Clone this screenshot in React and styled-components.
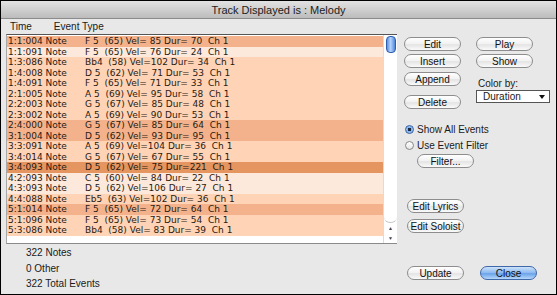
import styled, { createGlobalStyle } from "styled-components";

const GlobalStyle = createGlobalStyle`
    html, body {
        margin: 0;
        padding: 0;
        background: #ffffff;
    }
    body {
        font-family: "Lucida Grande", "Liberation Sans", "DejaVu Sans", sans-serif;
    }
`;

const events = [
    ["1:1:004", "F 5  (65) Vel= 85 Dur= 70  Ch 1", 70],
    ["1:1:091", "F 5  (65) Vel= 76 Dur= 24  Ch 1", 24],
    ["1:3:086", "Bb4  (58) Vel=102 Dur= 34  Ch 1", 34],
    ["1:4:008", "D 5  (62) Vel= 71 Dur= 53  Ch 1", 53],
    ["1:4:091", "F 5  (65) Vel= 71 Dur= 33  Ch 1", 33],
    ["2:1:005", "A 5  (69) Vel= 95 Dur= 58  Ch 1", 58],
    ["2:2:003", "G 5  (67) Vel= 85 Dur= 48  Ch 1", 48],
    ["2:3:002", "A 5  (69) Vel= 90 Dur= 53  Ch 1", 53],
    ["2:4:000", "G 5  (67) Vel= 85 Dur= 64  Ch 1", 64],
    ["3:1:004", "D 5  (62) Vel= 93 Dur= 95  Ch 1", 95],
    ["3:3:091", "A 5  (69) Vel=104 Dur= 36  Ch 1", 36],
    ["3:4:014", "G 5  (67) Vel= 67 Dur= 55  Ch 1", 55],
    ["3:4:093", "D 5  (62) Vel= 75 Dur=221  Ch 1", 221],
    ["4:2:093", "C 5  (60) Vel= 84 Dur= 22  Ch 1", 22],
    ["4:3:093", "D 5  (62) Vel=106 Dur= 27  Ch 1", 27],
    ["4:4:088", "Eb5  (63) Vel=102 Dur= 36  Ch 1", 36],
    ["5:1:014", "F 5  (65) Vel= 72 Dur= 64  Ch 1", 64],
    ["5:1:096", "F 5  (65) Vel= 73 Dur= 54  Ch 1", 54],
    ["5:3:086", "Bb4  (58) Vel= 83 Dur= 39  Ch 1", 39],
];

const shadeFor = (dur) => {
    if (dur > 100) return "#e5955f";
    if (dur >= 60) return "#f3b28b";
    if (dur >= 30) return "#fed3b6";
    return "#fde9dc";
};

const Window = styled.div`
    width: 557px;
    height: 295px;
    box-sizing: border-box;
    border: 1px solid #000;
    background: #e8e8e8;
    display: flex;
    flex-direction: column;
    font-size: 10px;
    color: #1a1a1a;
`;

const TitleBar = styled.div`
    height: 17px;
    flex: none;
    display: flex;
    align-items: center;
    justify-content: center;
    font-size: 11px;
    color: #1c1c1c;
    background: linear-gradient(#e2e2e2, #bcbcbc);
    border-bottom: 1px solid #8c8c8c;
`;

const Body = styled.div`
    flex: 1;
    display: flex;
`;

const LeftPane = styled.div`
    width: 391px;
    padding-left: 5px;
    display: flex;
    flex-direction: column;
`;

const Header = styled.div`
    height: 15px;
    display: flex;
    align-items: center;
    padding-left: 4px;
    gap: 22px;
`;

const ListBox = styled.div`
    height: 210px;
    box-sizing: border-box;
    display: flex;
    background: #fff;
    border-top: 1px solid #555;
    border-left: 1px solid #a8a8a8;
    border-bottom: 1px solid #8a8a8a;
`;

const Rows = styled.div`
    flex: 1;
    padding-top: 1px;
    font-family: "DejaVu Sans", "Liberation Sans", sans-serif;
    font-size: 9px;
`;

const Row = styled.div`
    height: 10.5px;
    line-height: 10.5px;
    display: flex;
    white-space: pre;
    background: ${(p) => p.$shade};
    color: #2a1a10;
    padding-left: 1px;
`;

const TimeCell = styled.span`
    width: 77px;
    flex: none;
`;

const Scrollbar = styled.div`
    width: 13px;
    flex: none;
    display: flex;
    flex-direction: column;
    align-items: center;
    border-left: 1px solid #dcdcdc;
    background: #fff;
`;

const Thumb = styled.div`
    margin-top: 1px;
    width: 8px;
    height: 15px;
    border-radius: 4px;
    border: 1px solid #2d5fb0;
    background: linear-gradient(90deg, #5b8fe0, #b6d4fb 45%, #4f86dd);
`;

const Track = styled.div`
    flex: 1;
    width: 100%;
    border-bottom: 1px solid #c8c8c8;
    border-radius: 0 0 6px 6px;
`;

const Arrow = styled.div`
    height: 10px;
    width: 100%;
    display: flex;
    align-items: center;
    justify-content: center;
    font-size: 5px;
    color: #444;
`;

const Stats = styled.div`
    padding-left: 20px;
    padding-top: 1px;
    line-height: 15.5px;
`;

const RightPane = styled.div`
    padding-left: 7px;
    padding-top: 18px;
    display: flex;
    flex-direction: column;
`;

const ButtonGrid = styled.div`
    display: flex;
    gap: 15px;
`;

const Column = styled.div`
    display: flex;
    flex-direction: column;
`;

const Button = styled.div`
    width: ${(p) => p.$width || 57}px;
    height: 14px;
    box-sizing: border-box;
    margin-top: ${(p) => p.$top || 0}px;
    margin-left: ${(p) => p.$left || 0}px;
    border-radius: 7px;
    border: 1px solid ${(p) => (p.$primary ? "#3e68a8" : "#8d8d8d")};
    background: ${(p) =>
        p.$primary
            ? "linear-gradient(#cfe2fa, #8ab8f0 50%, #6aa3ea 55%, #b7d7fb)"
            : "linear-gradient(#ffffff, #f1f1f1 50%, #e4e4e4 55%, #fafafa)"};
    display: flex;
    align-items: center;
    justify-content: center;
    font-size: 10px;
    color: #111;
`;

const Label = styled.div`
    margin-top: ${(p) => p.$top || 0}px;
    height: 11px;
    line-height: 11px;
    padding-left: 2px;
`;

const Select = styled.div`
    margin-top: 1px;
    width: 74px;
    height: 13px;
    box-sizing: border-box;
    border: 1px solid #555;
    background: #fff;
    display: flex;
    align-items: center;
    justify-content: space-between;
    padding: 0 4px 0 6px;
`;

const Caret = styled.span`
    width: 0;
    height: 0;
    border-left: 3px solid transparent;
    border-right: 3px solid transparent;
    border-top: 4px solid #111;
`;

const RadioRow = styled.div`
    margin-top: ${(p) => p.$top || 0}px;
    display: flex;
    align-items: center;
    gap: 3px;
    height: 11px;
    padding-left: 1px;
`;

const RadioDot = styled.span`
    width: 9px;
    height: 9px;
    box-sizing: border-box;
    border-radius: 50%;
    border: 1px solid ${(p) => (p.$on ? "#33609f" : "#888")};
    background: ${(p) =>
        p.$on
            ? "radial-gradient(circle, #1b2a40 0 1.5px, #7fb1ef 2px, #bcd8fb)"
            : "linear-gradient(#fff, #e6e6e6)"};
`;

const Footer = styled.div`
    margin-top: 33px;
    display: flex;
    gap: 16px;
`;

function App() {
    return (
        <>
            <GlobalStyle />
            <Window>
                <TitleBar>Track Displayed is : Melody</TitleBar>
                <Body>
                    <LeftPane>
                        <Header>
                            <span>Time</span>
                            <span>Event Type</span>
                        </Header>
                        <ListBox>
                            <Rows>
                                {events.map(([time, text, dur]) => (
                                    <Row key={time} $shade={shadeFor(dur)}>
                                        <TimeCell>{time} Note</TimeCell>
                                        <span>{text}</span>
                                    </Row>
                                ))}
                            </Rows>
                            <Scrollbar>
                                <Thumb />
                                <Track />
                                <Arrow>▲</Arrow>
                                <Arrow>▼</Arrow>
                            </Scrollbar>
                        </ListBox>
                        <Stats>
                            <div>322 Notes</div>
                            <div>0 Other</div>
                            <div>322 Total Events</div>
                        </Stats>
                    </LeftPane>
                    <RightPane>
                        <ButtonGrid>
                            <Column>
                                <Button>Edit</Button>
                                <Button $top={3}>Insert</Button>
                                <Button $top={4}>Append</Button>
                                <Button $top={9}>Delete</Button>
                            </Column>
                            <Column>
                                <Button>Play</Button>
                                <Button $top={3}>Show</Button>
                                <Label $top={10}>Color by:</Label>
                                <Select>
                                    <span>Duration</span>
                                    <Caret />
                                </Select>
                            </Column>
                        </ButtonGrid>
                        <RadioRow $top={15}>
                            <RadioDot $on />
                            <span>Show All Events</span>
                        </RadioRow>
                        <RadioRow $top={5}>
                            <RadioDot />
                            <span>Use Event Filter</span>
                        </RadioRow>
                        <Button $top={3} $left={13}>Filter...</Button>
                        <Button $top={31} $left={3}>Edit Lyrics</Button>
                        <Button $top={6} $left={3}>Edit Soloist</Button>
                        <Footer>
                            <Button $left={3}>Update</Button>
                            <Button $primary>Close</Button>
                        </Footer>
                    </RightPane>
                </Body>
            </Window>
        </>
    );
}

export default App;
